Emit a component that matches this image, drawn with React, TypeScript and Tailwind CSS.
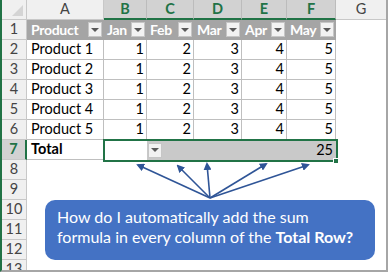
const products = ["Product 1", "Product 2", "Product 3", "Product 4", "Product 5"];
const months = ["Jan", "Feb", "Mar", "Apr", "May"];
const letters = ["B", "C", "D", "E", "F"];

function Dropdown() {
  return (
    <div className="w-[14px] h-[15px] bg-[#f2f2f2] border border-[#c6c6c6] flex items-center justify-center shrink-0">
      <div className="w-0 h-0 border-l-[4px] border-r-[4px] border-t-[4px] border-l-transparent border-r-transparent border-t-[#595959]" />
    </div>
  );
}

function RowHead({ n, active = false }: { n: number; active?: boolean }) {
  return active ? (
    <div className="h-5 flex items-center justify-center bg-[#d2d2d2] border-b border-[#c8c8c8] border-r-2 border-r-[#217346] text-[#217346] font-bold">
      {n}
    </div>
  ) : (
    <div className="h-5 flex items-center justify-center bg-[#f0f0f0] border-b border-r border-[#c8c8c8] text-[#444]">
      {n}
    </div>
  );
}

export default function App() {
  return (
    <div className="relative w-[388px] h-[272px] overflow-hidden bg-white border-l-2 border-l-[#217346] border-r-2 border-r-[#a6a6a6] border-b-2 border-b-[#a6a6a6] font-['Lato',sans-serif] text-[14.5px] leading-none text-black">
      <div className="grid grid-cols-[25px_77px_43px_47px_48px_45px_49px_1fr] auto-rows-[20px]">
        {/* column headers */}
        <div className="bg-[#f0f0f0] border-r border-b border-[#c8c8c8] flex items-end justify-end pr-[3px] pb-[3px]">
          <svg width="11" height="11" className="block">
            <polygon points="11,0 11,11 0,11" fill="#d4d4d4" />
          </svg>
        </div>
        <div className="bg-[#f0f0f0] border-r border-b border-[#c8c8c8] flex items-center justify-center text-[#444]">A</div>
        {letters.map((l) => (
          <div key={l} className="bg-[#d2d2d2] border-r border-[#bcbcbc] border-b-2 border-b-[#217346] flex items-center justify-center text-[#217346] font-bold">
            {l}
          </div>
        ))}
        <div className="bg-[#f0f0f0] border-b border-[#c8c8c8] flex items-center justify-center text-[#444]">G</div>

        {/* row 1: table header */}
        <RowHead n={1} />
        <div className="bg-[#a5a5a5] text-white font-bold text-[14px] tracking-[-0.3px] flex items-center justify-between pl-[4px] pr-[2px] border-b border-[#a5a5a5]">
          <span>Product</span>
          <Dropdown />
        </div>
        {months.map((m) => (
          <div key={m} className="bg-[#a5a5a5] text-white font-bold text-[14px] tracking-[-0.3px] flex items-center justify-between pl-[3px] pr-[2px] border-b border-[#a5a5a5]">
            <span>{m}</span>
            <Dropdown />
          </div>
        ))}
        <div />

        {/* rows 2-6 */}
        {products.map((p, i) => (
          <div key={p} className="contents">
            <RowHead n={i + 2} />
            <div className="flex items-center pl-[4px] border-r border-b border-[#bfbfbf]">{p}</div>
            {[1, 2, 3, 4, 5].map((v) => (
              <div key={v} className="flex items-center justify-end pr-[2px] border-r border-b border-[#bfbfbf]">
                {v}
              </div>
            ))}
            <div />
          </div>
        ))}

        {/* row 7: total */}
        <RowHead n={7} active />
        <div className="flex items-center pl-[4px] font-bold border-b border-[#bfbfbf]">Total</div>
        <div className="bg-white" />
        <div className="bg-[#c9c9c9] flex items-center pl-[1px]">
          <Dropdown />
        </div>
        <div className="bg-[#c9c9c9]" />
        <div className="bg-[#c9c9c9]" />
        <div className="bg-[#c9c9c9] flex items-center justify-end pr-[3px]">25</div>
        <div />

        {/* rows 8-13 */}
        {[8, 9, 10, 11, 12, 13].map((n) => (
          <div key={n} className="contents">
            <RowHead n={n} />
            <div className="col-span-7" />
          </div>
        ))}
      </div>

      {/* selection outline over B7:F7 */}
      <div className="absolute left-[101px] top-[139px] w-[235px] h-[23px] border-2 border-[#217346]" />
      <div className="absolute left-[331px] top-[158px] w-[6px] h-[6px] bg-[#217346] border border-white" />

      {/* arrows */}
      <svg className="absolute left-[-2px] top-0 pointer-events-none" width="388" height="272">
        <defs>
          <marker id="ah" markerWidth="8" markerHeight="8" refX="6" refY="4" orient="auto" markerUnits="userSpaceOnUse">
            <path d="M0,0 L8,4 L0,8 Z" fill="#2f5597" />
          </marker>
        </defs>
        {[
          [138, 165],
          [178, 166],
          [207, 164],
          [266, 164],
          [308, 165],
        ].map(([x, y], i) => (
          <line key={i} x1="210" y1="198" x2={x} y2={y} stroke="#2f5597" strokeWidth="1.6" markerEnd="url(#ah)" />
        ))}
      </svg>

      {/* callout */}
      <div className="absolute left-[43px] top-[200px] w-[330px] h-[60px] rounded-[10px] bg-[#4472c4] text-white text-[16px] leading-[20px] pl-[12px] pt-[7px]">
        <div>How do I automatically add the sum</div>
        <div>
          formula in every column of the <span className="font-bold">Total Row?</span>
        </div>
      </div>
    </div>
  );
}
